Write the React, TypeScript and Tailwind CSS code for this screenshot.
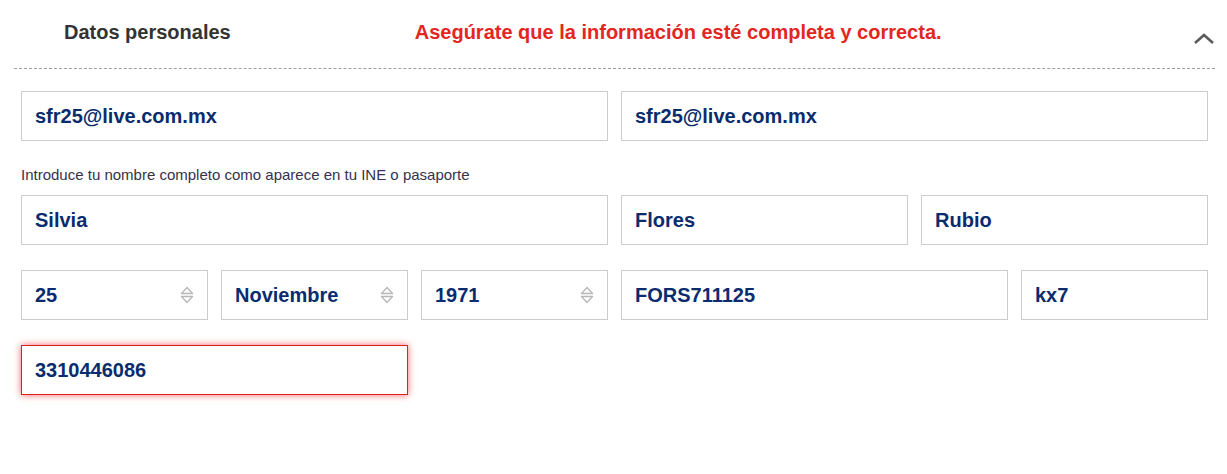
import React from 'react';

const font = { fontFamily: '"Liberation Sans", Arial, sans-serif' };

const Spinner: React.FC = () => (
  <svg width="14" height="20" viewBox="0 0 14 20" className="shrink-0">
    <path d="M1.5 8.5 L7 2.5 L12.5 8.5 Z" fill="none" stroke="#b8b8b8" strokeWidth="1.3" strokeLinejoin="round" />
    <path d="M1.5 11.5 L7 17.5 L12.5 11.5 Z" fill="none" stroke="#b8b8b8" strokeWidth="1.3" strokeLinejoin="round" />
  </svg>
);

interface FieldProps {
  value: string;
  className?: string;
  select?: boolean;
  error?: boolean;
}

const Field: React.FC<FieldProps> = ({ value, className = '', select, error }) => (
  <div
    className={`h-[50px] shrink-0 flex items-center justify-between pl-[13px] pr-[13px] bg-white border ${
      error
        ? 'border-[#e0201c] shadow-[0_0_7px_rgba(240,20,20,0.65)]'
        : 'border-[#cccccc]'
    } ${className}`}
  >
    <span className="text-[20px] font-bold text-[#0a2c6e] leading-none">{value}</span>
    {select && <Spinner />}
  </div>
);

export default function App() {
  return (
    <div className="w-[1227px] h-[474px] bg-white overflow-hidden" style={font}>
      {/* Header */}
      <div className="relative h-[68px]">
        <div className="flex items-center h-[64px]">
          <h2 className="ml-[64px] text-[20px] font-bold text-[#333333] whitespace-nowrap">Datos personales</h2>
          <p className="ml-[184px] text-[20px] font-bold text-[#e3261f] whitespace-nowrap">
            Asegúrate que la información esté completa y correcta.
          </p>
        </div>
        <svg
          width="22"
          height="12"
          viewBox="0 0 22 12"
          className="absolute left-[1193px] top-[33px]"
        >
          <path d="M2 10 L11 2 L20 10" fill="none" stroke="#5a5a5a" strokeWidth="2.6" />
        </svg>
      </div>
      <div className="ml-[14px] w-[1201px] border-t border-dashed border-[#9e9e9e]" />

      {/* Form */}
      <div className="pl-[21px] pt-[22px] flex flex-col">
        <div className="flex gap-[13px]">
          <Field value="sfr25@live.com.mx" className="w-[587px]" />
          <Field value="sfr25@live.com.mx" className="w-[587px]" />
        </div>

        <p className="mt-[25px] mb-[11px] text-[15px] leading-[18px] text-[#33334d] whitespace-nowrap">
          Introduce tu nombre completo como aparece en tu INE o pasaporte
        </p>

        <div className="flex gap-[13px]">
          <Field value="Silvia" className="w-[587px]" />
          <Field value="Flores" className="w-[287px]" />
          <Field value="Rubio" className="w-[287px]" />
        </div>

        <div className="flex gap-[13px] mt-[25px]">
          <Field value="25" select className="w-[187px]" />
          <Field value="Noviembre" select className="w-[187px]" />
          <Field value="1971" select className="w-[187px]" />
          <Field value="FORS711125" className="w-[387px]" />
          <Field value="kx7" className="w-[187px]" />
        </div>

        <div className="flex mt-[25px]">
          <Field value="3310446086" error className="w-[387px]" />
        </div>
      </div>
    </div>
  );
}
